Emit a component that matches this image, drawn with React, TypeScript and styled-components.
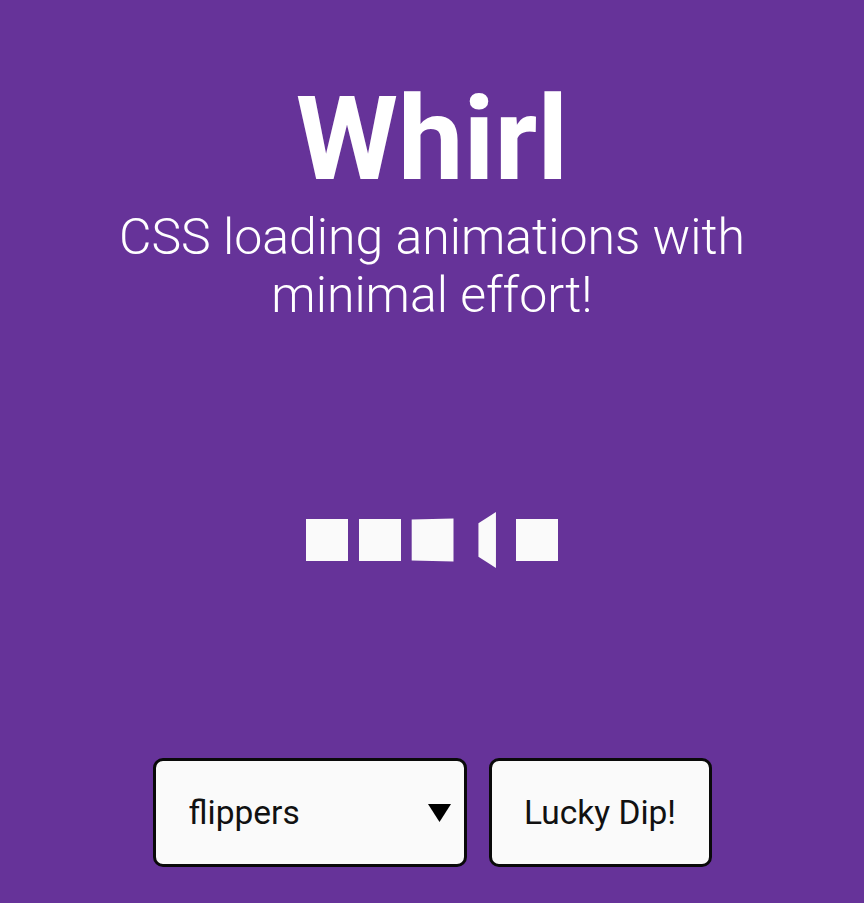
import React from "react";
import styled, { createGlobalStyle } from "styled-components";

const GlobalStyle = createGlobalStyle`
  html, body {
    margin: 0;
    padding: 0;
    background: #663399;
  }
  body {
    font-family: Roboto, "Noto Sans", "Liberation Sans", sans-serif;
    color: #ffffff;
  }
  * { box-sizing: border-box; }
`;

const Page = styled.div`
  min-height: 100vh;
  display: flex;
  flex-direction: column;
  align-items: center;
  background: #663399;
`;

const Header = styled.header`
  display: flex;
  flex-direction: column;
  align-items: center;
  text-align: center;
  padding-top: 81px;
`;

const Title = styled.h1`
  margin: 0;
  font-size: 117px;
  font-weight: 700;
  line-height: 117px;
  letter-spacing: 0;
`;

const Subtitle = styled.p`
  margin: 10px 0 0;
  font-size: 50px;
  font-weight: 300;
  line-height: 58px;
  width: 680px;
`;

const Stage = styled.main`
  flex: 1;
  display: flex;
  align-items: center;
  justify-content: center;
  padding-bottom: 2px;
`;

const Flippers = styled.div`
  display: flex;
  gap: 10.5px;
`;

const Flipper = styled.div<{ $tilt: number }>`
  width: 42px;
  height: 42px;
  background: #fafafa;
  transform: ${(p) => (p.$tilt ? `perspective(77px) rotateY(${p.$tilt}deg)` : "none")};
`;

const Controls = styled.footer`
  display: flex;
  gap: 22px;
  padding-bottom: 36px;
`;

const SelectWrap = styled.div`
  position: relative;
  width: 314px;
  height: 109px;
`;

const Select = styled.select`
  appearance: none;
  -webkit-appearance: none;
  width: 100%;
  height: 100%;
  padding: 0 60px 0 33px;
  background: #fafafa;
  color: #111;
  border: 3px solid #0a0a0a;
  border-radius: 10px;
  font-family: Roboto, "Noto Sans", sans-serif;
  font-size: 33.5px;
  font-weight: 400;
  outline: none;
`;

const Caret = styled.svg`
  position: absolute;
  right: 16px;
  top: 46px;
  width: 23px;
  height: 18px;
  pointer-events: none;
`;

const Button = styled.button`
  width: 223px;
  height: 109px;
  padding: 0;
  background: #fafafa;
  color: #111;
  border: 3px solid #0a0a0a;
  border-radius: 10px;
  font-family: Roboto, "Noto Sans", sans-serif;
  font-size: 33.5px;
  font-weight: 400;
  cursor: pointer;
`;

const tilts = [0, 0, -6, -67, 0];

export default function App() {
  return (
    <>
      <GlobalStyle />
      <Page>
        <Header>
          <Title>Whirl</Title>
          <Subtitle>CSS loading animations with minimal effort!</Subtitle>
        </Header>
        <Stage>
          <Flippers>
            {tilts.map((t, i) => (
              <Flipper key={i} $tilt={t} />
            ))}
          </Flippers>
        </Stage>
        <Controls>
          <SelectWrap>
            <Select defaultValue="flippers">
              <option value="flippers">flippers</option>
            </Select>
            <Caret viewBox="0 0 23 18">
              <polygon points="0,0 23,0 11.5,18" fill="#000" />
            </Caret>
          </SelectWrap>
          <Button>Lucky Dip!</Button>
        </Controls>
      </Page>
    </>
  );
}
